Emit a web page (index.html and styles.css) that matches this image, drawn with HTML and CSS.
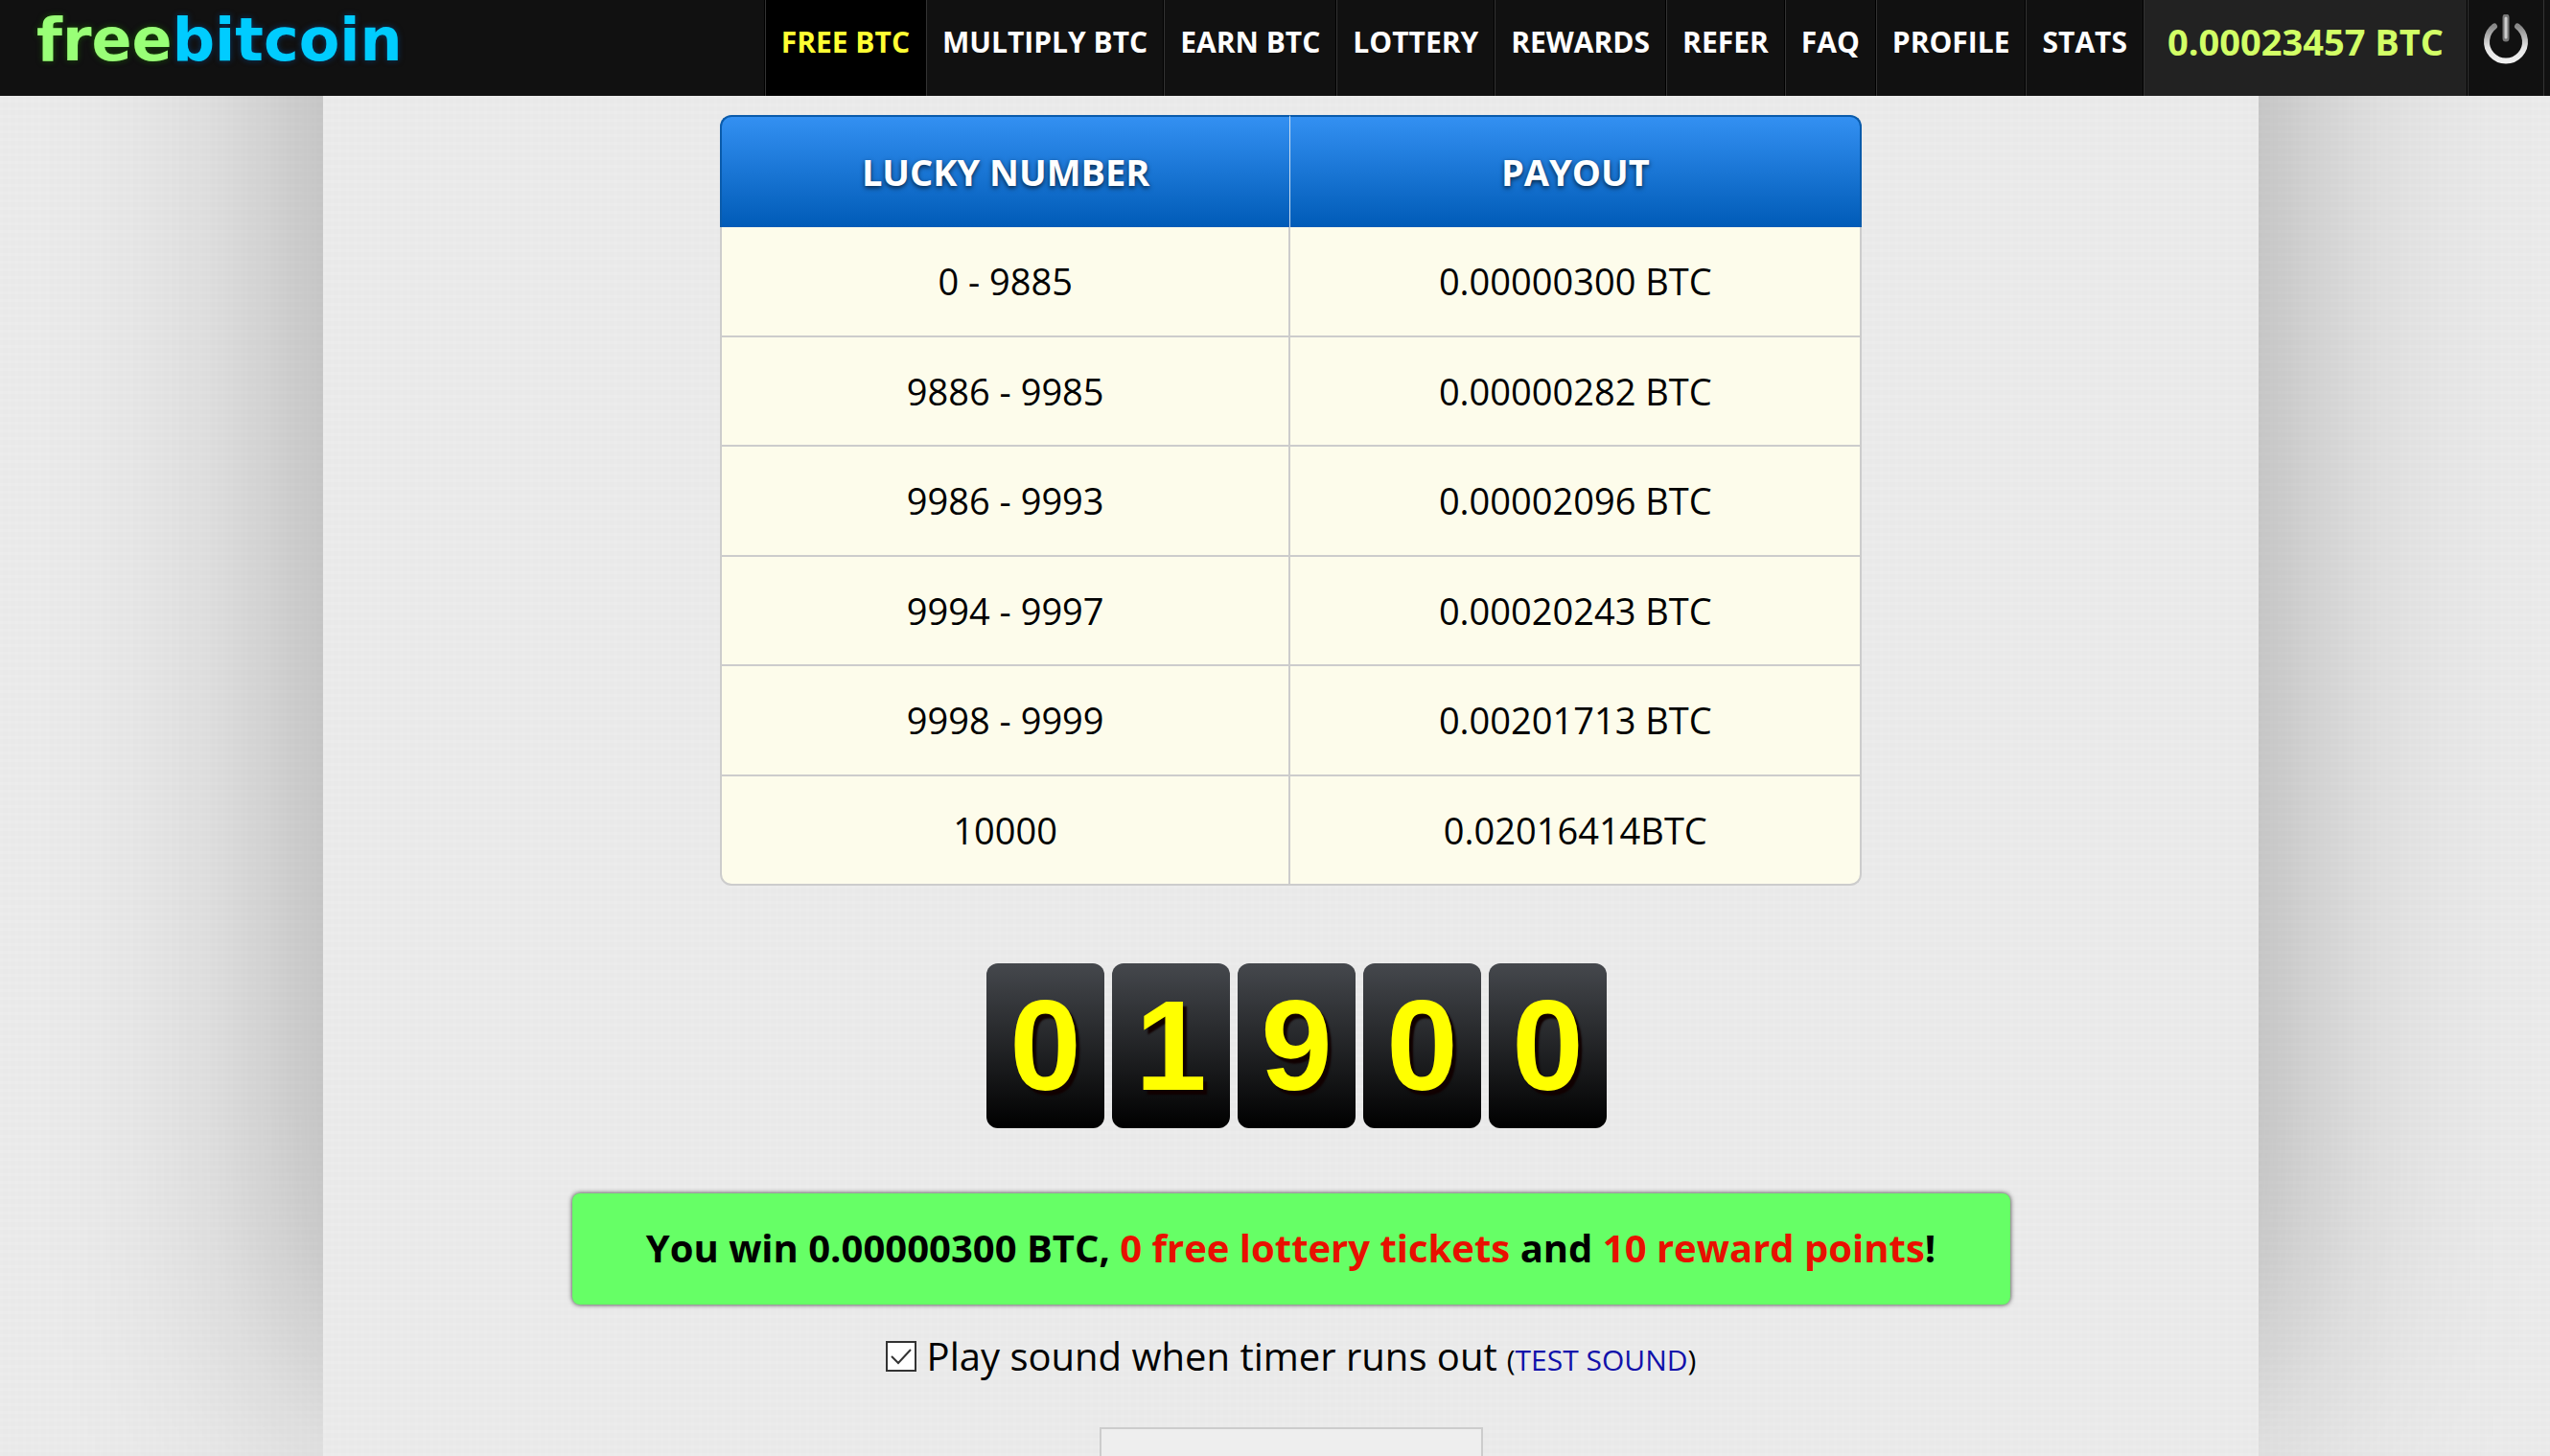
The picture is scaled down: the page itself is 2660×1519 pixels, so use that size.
FILE: index.html
```html
<!DOCTYPE html>
<html lang="en">
<head>
<meta charset="utf-8">
<title>FreeBitcoin</title>
<link rel="stylesheet" href="styles.css">
</head>
<body>
<header class="topbar">
  <a class="logo" href="#"><span class="logo-free">free</span><span class="logo-bitcoin">bitcoin</span></a>
  <nav class="menu">
    <a class="menu-item active" href="#">FREE BTC</a>
    <a class="menu-item" href="#">MULTIPLY BTC</a>
    <a class="menu-item" href="#">EARN BTC</a>
    <a class="menu-item" href="#">LOTTERY</a>
    <a class="menu-item" href="#">REWARDS</a>
    <a class="menu-item" href="#">REFER</a>
    <a class="menu-item" href="#">FAQ</a>
    <a class="menu-item" href="#">PROFILE</a>
    <a class="menu-item" href="#">STATS</a>
    <a class="menu-item balance" href="#">0.00023457 BTC</a>
    <button class="menu-item power" type="button" aria-label="Log out">
      <svg class="power-icon" viewBox="0 0 48 52" aria-hidden="true">
        <defs>
          <linearGradient id="ring" x1="0" y1="0" x2="0" y2="1">
            <stop offset="0" stop-color="#888"/>
            <stop offset="0.6" stop-color="#e4e4e4"/>
            <stop offset="1" stop-color="#f0f0f0"/>
          </linearGradient>
        </defs>
        <path d="M12 12.5A20 20 0 1 0 36 12.5" fill="none" stroke="url(#ring)" stroke-width="6" stroke-linecap="round"/>
        <path d="M24 3V25" stroke="#777" stroke-width="7" stroke-linecap="round"/>
        <path d="M24 4V24" stroke="#ccc" stroke-width="3" stroke-linecap="round"/>
      </svg>
    </button>
  </nav>
</header>
<main class="page">
  <table class="payouts">
    <thead>
      <tr><th scope="col">LUCKY NUMBER</th><th scope="col">PAYOUT</th></tr>
    </thead>
    <tbody>
      <tr><td>0 - 9885</td><td>0.00000300 BTC</td></tr>
      <tr><td>9886 - 9985</td><td>0.00000282 BTC</td></tr>
      <tr><td>9986 - 9993</td><td>0.00002096 BTC</td></tr>
      <tr><td>9994 - 9997</td><td>0.00020243 BTC</td></tr>
      <tr><td>9998 - 9999</td><td>0.00201713 BTC</td></tr>
      <tr><td>10000</td><td>0.02016414BTC</td></tr>
    </tbody>
  </table>
  <div class="digits">
    <span class="digit">0</span>
    <span class="digit">1</span>
    <span class="digit">9</span>
    <span class="digit">0</span>
    <span class="digit">0</span>
  </div>
  <p class="result">You win 0.00000300 BTC, <span class="bonus">0 free lottery tickets</span> and <span class="bonus">10 reward points</span>!</p>
  <div class="sound">
    <input class="sound-check" id="sound" type="checkbox" checked>
    <label for="sound">Play sound when timer runs out</label>
    <span class="sound-test">(<a href="#">TEST SOUND</a>)</span>
  </div>
  <div class="timer"></div>
</main>
</body>
</html>
```
FILE: styles.css
```css
* {
  box-sizing: border-box;
}

body {
  margin: 0;
  height: 100vh;
  display: flex;
  flex-direction: column;
  overflow: hidden;
  font-family: "Open Sans", "Noto Sans", sans-serif;
  color: #000;
}

/* faint woven texture shared by the backdrop and the page */
body,
.page {
  background-color: #e9e9e9;
  background-image:
    repeating-linear-gradient(rgba(255, 255, 255, 0.1) 0 3px, transparent 3px 8px),
    repeating-linear-gradient(90deg, rgba(255, 255, 255, 0.05) 0 3px, transparent 3px 8px);
}

a {
  text-decoration: none;
}

.topbar {
  position: relative;
  z-index: 1;
  flex: none;
  display: flex;
  justify-content: space-between;
  height: 100px;
  padding: 0 6px 0 38px;
  background: #111;
}

.logo {
  font: bold 62px/84px "DejaVu Sans", sans-serif;
}

.logo-free {
  color: #9f7;
  text-shadow: 0 0 6px rgba(30, 120, 0, 0.6);
}

.logo-bitcoin {
  color: #0cf;
  text-shadow: 0 0 6px rgba(0, 80, 160, 0.6);
}

.menu {
  display: flex;
  border-left: 1px solid #000;
}

.menu-item {
  padding: 0 16px;
  border: solid;
  border-width: 0 1px;
  border-color: transparent #000 transparent #333;
  font-size: 30px;
  font-weight: bold;
  line-height: 88px;
  white-space: nowrap;
  color: #fff;
}

.active {
  color: #ffff33;
  background: #000;
}

.balance {
  padding: 0 24px;
  font-size: 38px;
  line-height: 86px;
  color: #d2ff66;
  background: #222;
}

.power {
  display: flex;
  justify-content: center;
  width: 80px;
  padding: 15px 0 0;
  border-right-color: #333;
  background: none;
}

.power-icon {
  width: 48px;
  height: 52px;
}

/* the page starts above the top bar, so its side shadow is even below it */
.page {
  flex: 1;
  display: flex;
  flex-direction: column;
  align-items: center;
  margin: -400px 304px 0 337px;
  padding-top: 420px;
  box-shadow: 0 -70px 250px rgba(0, 0, 0, 0.31);
}

.payouts {
  width: 59%;
  height: 804px;
  table-layout: fixed;
  border-collapse: separate;
  border-spacing: 0;
  font-size: 38px;
  line-height: 52px;
  text-align: center;
}

.payouts th {
  height: 117px;
  padding: 0 0 2px;
  border: 2px solid #0a5bab;
  border-width: 2px 2px 0;
  color: #fff;
  text-shadow: 0 2px 5px rgba(0, 0, 0, 0.7);
  background: linear-gradient(#3390f2, #005bb7);
}

.payouts th:first-child {
  border-right: 1px solid #cde;
  border-top-left-radius: 12px;
}

.payouts th:last-child {
  border-left: 0;
  border-top-right-radius: 12px;
}

.payouts td {
  padding: 30px 0;
  border: solid #ccc;
  border-width: 0 2px 2px 0;
  background: #fdfceb;
}

.payouts td:first-child {
  border-left-width: 2px;
}

.payouts tr:last-child td:first-child {
  border-bottom-left-radius: 12px;
}

.payouts tr:last-child td:last-child {
  border-bottom-right-radius: 12px;
}

.digits {
  display: flex;
  gap: 8px;
  margin: 81px 0 0 12px;
}

.digit {
  width: 123px;
  height: 172px;
  border-radius: 12px;
  font: bold 134px/172px "Liberation Sans", Arial, sans-serif;
  text-align: center;
  color: #ff0;
  text-shadow: 4px 5px 2px #100;
  background: linear-gradient(#45484d, #000);
}

.result {
  width: 1500px;
  max-width: 100%;
  margin: 68px 0 0;
  padding: 30px 0 32px;
  border-radius: 8px;
  font-size: 40px;
  font-weight: bold;
  line-height: 54px;
  text-align: center;
  background: #6f6;
  box-shadow: 0 0 5px #333;
}

.bonus {
  color: #e81000;
}

.sound {
  display: flex;
  align-items: baseline;
  margin-top: 27px;
  font-size: 40px;
  line-height: 54px;
}

.sound-check {
  align-self: center;
  appearance: none;
  width: 32px;
  height: 32px;
  margin: 0 11px 4px 0;
  border: 2px solid #333;
  background: #fff url("data:image/svg+xml,%3Csvg xmlns='http://www.w3.org/2000/svg' viewBox='0 0 28 28'%3E%3Cpath d='M4 14L11 21L24 7' fill='none' stroke='%23333' stroke-width='2'/%3E%3C/svg%3E");
}

.sound-test {
  margin-left: 10px;
  font-size: 30px;
}

.sound-test a {
  color: #11a;
}

.timer {
  width: 400px;
  height: 100px;
  margin: 43px 0 -71px;
  border: 2px solid #ccc;
  background: #eee;
}
```
